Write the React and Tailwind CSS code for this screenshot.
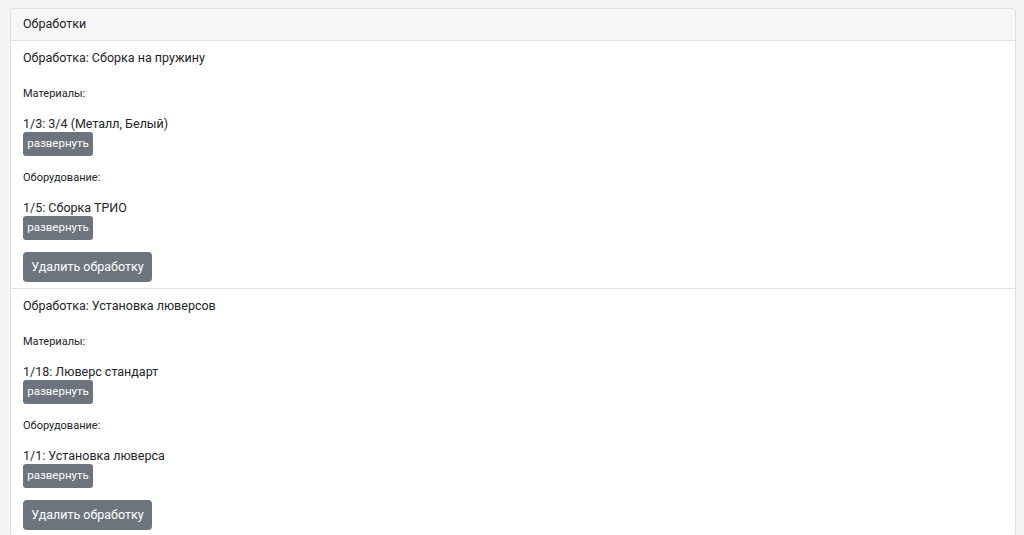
import React from "react";

const items = [
  {
    title: "Обработка: Сборка на пружину",
    material: "1/3: 3/4 (Металл, Белый)",
    equipment: "1/5: Сборка ТРИО",
  },
  {
    title: "Обработка: Установка люверсов",
    material: "1/18: Люверс стандарт",
    equipment: "1/1: Установка люверса",
  },
];

function SmallBtn() {
  return (
    <button className="h-[24px] w-[70px] rounded-[3px] bg-[#6c757d] text-[11.5px] text-white leading-none flex items-center justify-center">
      развернуть
    </button>
  );
}

function Item({ it, first }) {
  return (
    <div className={"px-[12px] pt-[7px] pb-[6px] " + (first ? "" : "border-t border-[#e3e3e3]")}>
      <div className="text-[12.5px] leading-[20px] text-[#212529]">{it.title}</div>
      <div className="mt-[17px] text-[11px] leading-[18px] text-[#212529]">Материалы:</div>
      <div className="mt-[12px] text-[12.5px] leading-[17px] text-[#212529]">{it.material}</div>
      <SmallBtn />
      <div className="mt-[13px] text-[11px] leading-[18px] text-[#212529]">Оборудование:</div>
      <div className="mt-[12px] text-[12.5px] leading-[17px] text-[#212529]">{it.equipment}</div>
      <SmallBtn />
      <button className="mt-[12px] h-[30px] w-[129px] rounded-[4px] bg-[#6c757d] text-[12.5px] text-white leading-none flex items-center justify-center">
        Удалить обработку
      </button>
    </div>
  );
}

export default function App() {
  return (
    <div
      className="min-h-screen bg-[#f4f5f7] pt-[8px] pl-[10px] pr-[8px]"
      style={{ fontFamily: 'Roboto, "Noto Sans", sans-serif' }}
    >
      <div className="rounded-[4px] border border-[#dfdfdf] bg-white overflow-hidden">
        <div className="h-[32px] bg-[#f7f7f7] border-b border-[#dfdfdf] px-[12px] flex items-center text-[12.5px] text-[#212529]">
          Обработки
        </div>
        {items.map((it, i) => (
          <Item key={i} it={it} first={i === 0} />
        ))}
      </div>
    </div>
  );
}
